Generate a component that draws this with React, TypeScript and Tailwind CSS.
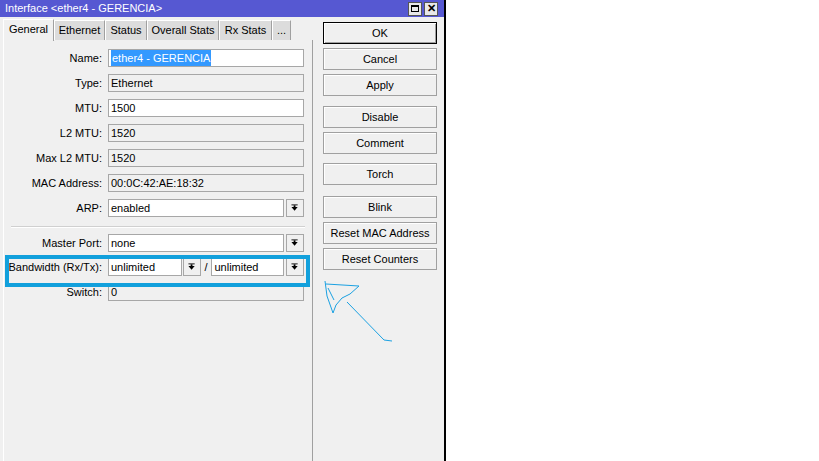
import React from 'react';

const font = { fontFamily: '"Liberation Sans", Arial, sans-serif' };

const DropIcon = () => (
  <svg width="18" height="16" viewBox="0 0 18 16">
    <rect x="5" y="4" width="7" height="1" fill="#000" />
    <rect x="7.5" y="5" width="2" height="2" fill="#000" />
    <polygon points="5,7 12,7 8.5,11" fill="#000" />
  </svg>
);

const DropButton = () => (
  <div className="w-[18px] h-[18px] border border-[#a7a7a7] bg-[#f0f0f0] flex items-center justify-center shrink-0">
    <DropIcon />
  </div>
);

const Field: React.FC<{ value?: React.ReactNode; readOnly?: boolean; className?: string }> = ({ value, readOnly, className }) => (
  <div
    className={`h-[18px] border border-[#a7a7a7] flex items-center pl-[2px] text-[11px] text-black whitespace-nowrap overflow-hidden ${
      readOnly ? 'bg-[#f0f0f0]' : 'bg-white'
    } ${className ?? ''}`}
  >
    {value}
  </div>
);

const Row: React.FC<{ label: string; children: React.ReactNode }> = ({ label, children }) => (
  <div className="flex items-center h-[18px]">
    <div className="w-[98px] text-right text-[11px] text-black whitespace-nowrap">{label}</div>
    <div className="ml-[6px] flex items-center w-[196px]">{children}</div>
  </div>
);

const Tab: React.FC<{ label: string; active?: boolean; w: number }> = ({ label, active, w }) => (
  <div
    style={{ width: w }}
    className={
      active
        ? 'h-[22px] bg-[#f0f0f0] border-l border-t border-white border-r border-r-[#a0a0a0] flex items-center justify-center text-[11px] text-black relative z-10 -mb-px pb-[2px]'
        : 'h-[20px] bg-[#dcdcdc] border-l border-t border-white border-r border-r-[#a0a0a0] flex items-center justify-center text-[11px] text-black'
    }
  >
    {label}
  </div>
);

const Btn: React.FC<{ label: string; def?: boolean; className?: string }> = ({ label, def, className }) => (
  <div
    className={`h-[22px] w-[114px] flex items-center justify-center text-[11px] text-black bg-[#f0f0f0] ${
      def ? 'border border-black shadow-[inset_1px_1px_0_#fff,inset_-1px_-1px_0_#a0a0a0]' : 'border border-[#a0a0a0] shadow-[inset_1px_1px_0_#fff]'
    } ${className ?? ''}`}
  >
    {label}
  </div>
);

export default function App() {
  return (
    <div className="relative w-[819px] h-[461px] bg-white flex overflow-hidden" style={font}>
      <div className="w-[446px] h-full bg-[#f0f0f0] flex flex-col border-r-2 border-black">
        {/* title bar */}
        <div className="h-[17px] bg-[#5658d2] flex items-center pl-[5px] pr-[6px]">
          <span className="text-[11px] text-white">Interface &lt;ether4 - GERENCIA&gt;</span>
          <div className="ml-auto flex gap-[2px]">
            <div className="w-[14px] h-[14px] bg-[#e8e8e8] border border-[#555] flex items-center justify-center">
              <div className="w-[8px] h-[7px] border border-black border-t-2" />
            </div>
            <div className="w-[14px] h-[14px] bg-[#e8e8e8] border border-[#555] flex items-center justify-center text-[11px] font-bold leading-none text-black">
              ✕
            </div>
          </div>
        </div>

        <div className="flex flex-1">
          {/* left panel */}
          <div className="ml-[3px] w-[310px] flex flex-col">
            <div className="mt-[1px] h-[22px] flex items-end">
              <Tab label="General" active w={51} />
              <Tab label="Ethernet" w={51} />
              <Tab label="Status" w={42} />
              <Tab label="Overall Stats" w={72} />
              <Tab label="Rx Stats" w={53} />
              <Tab label="..." w={19} />
            </div>
            <div className="flex-1 border-l border-white border-r border-r-[#a0a0a0] pt-[9px]">
              <div className="flex flex-col gap-[7px]">
                <Row label="Name:">
                  <Field
                    className="w-full"
                    value={<span className="bg-[#3399ff] text-white px-[1px]">ether4 - GERENCIA</span>}
                  />
                </Row>
                <Row label="Type:">
                  <Field className="w-full" readOnly value="Ethernet" />
                </Row>
                <Row label="MTU:">
                  <Field className="w-full" value="1500" />
                </Row>
                <Row label="L2 MTU:">
                  <Field className="w-full" readOnly value="1520" />
                </Row>
                <Row label="Max L2 MTU:">
                  <Field className="w-full" readOnly value="1520" />
                </Row>
                <Row label="MAC Address:">
                  <Field className="w-full" readOnly value="00:0C:42:AE:18:32" />
                </Row>
                <Row label="ARP:">
                  <Field className="w-[176px]" value="enabled" />
                  <div className="ml-[2px]">
                    <DropButton />
                  </div>
                </Row>
              </div>
              <div className="mt-[9px] ml-[7px] w-[294px] border-t border-[#d0d0d0] border-b border-b-white" />
              <div className="mt-[6px] flex flex-col gap-[6px]">
                <Row label="Master Port:">
                  <Field className="w-[176px]" value="none" />
                  <div className="ml-[2px]">
                    <DropButton />
                  </div>
                </Row>
                <Row label="Bandwidth (Rx/Tx):">
                  <Field className="w-[74px]" value="unlimited" />
                  <div className="ml-[1px]">
                    <DropButton />
                  </div>
                  <div className="w-[11px] text-center text-[11px] text-black">/</div>
                  <Field className="w-[73px]" value="unlimited" />
                  <div className="ml-[2px]">
                    <DropButton />
                  </div>
                </Row>
                <div className="mt-[1px]">
                  <Row label="Switch:">
                    <Field className="w-full" readOnly value="0" />
                  </Row>
                </div>
              </div>
            </div>
          </div>

          {/* right buttons */}
          <div className="ml-[10px] pt-[5px] flex flex-col">
            <Btn label="OK" def />
            <Btn label="Cancel" className="mt-[4px]" />
            <Btn label="Apply" className="mt-[4px]" />
            <Btn label="Disable" className="mt-[10px]" />
            <Btn label="Comment" className="mt-[4px]" />
            <Btn label="Torch" className="mt-[9px]" />
            <Btn label="Blink" className="mt-[11px]" />
            <Btn label="Reset MAC Address" className="mt-[4px]" />
            <Btn label="Reset Counters" className="mt-[4px]" />
          </div>
        </div>
      </div>

      {/* annotation: highlight box */}
      <div className="absolute left-[5px] top-[255px] w-[305px] h-[32px] border-4 border-[#12a0dc] pointer-events-none" />

      {/* annotation: hand-drawn arrow */}
      <svg className="absolute inset-0 pointer-events-none" width="819" height="461" viewBox="0 0 819 461">
        <g fill="none" stroke="#1ba1e2" strokeWidth="1">
          <path d="M325,281 L327,296 L333,313 L336,305 L342,298 L350,294 L359,286 L326,284" />
          <path d="M328,288 L334,300" />
          <path d="M347,302 L384,340 L392,341" />
        </g>
      </svg>
    </div>
  );
}
